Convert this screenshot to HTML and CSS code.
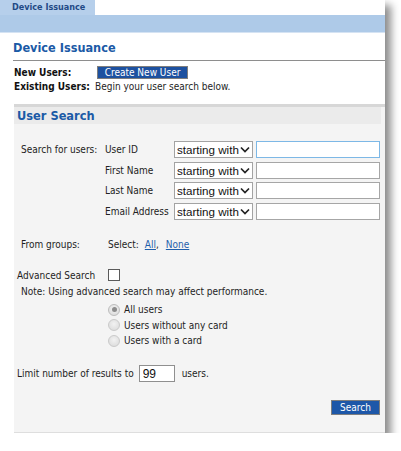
FILE: index.html
```html
<!DOCTYPE html>
<html>
<head>
<meta charset="utf-8">
<link rel="stylesheet" href="styles.css">
</head>
<body>
<div class="window">
  <div class="tabbar"><div class="tab">Device Issuance</div></div>
  <div class="band"></div>
  <div class="top">
    <h1 class="title">Device Issuance</h1>
    <div class="rule"></div>
    <div class="info-row first">
      <span class="info-label">New Users:</span>
      <button class="btn btn-create">Create New User</button>
    </div>
    <div class="info-row">
      <span class="info-label">Existing Users:</span>
      <span class="info-text">Begin your user search below.</span>
    </div>
  </div>
  <div class="panel">
    <div class="panel-head">User Search</div>
    <div class="search-grid">
      <span class="lbl">Search for users:</span><span class="field">User ID</span>
      <select class="sel"><option>starting with</option></select><input class="txt focus" type="text">
      <span></span><span class="field">First Name</span>
      <select class="sel"><option>starting with</option></select><input class="txt" type="text">
      <span></span><span class="field">Last Name</span>
      <select class="sel"><option>starting with</option></select><input class="txt" type="text">
      <span></span><span class="field">Email Address</span>
      <select class="sel"><option>starting with</option></select><input class="txt" type="text">
    </div>
    <div class="groups-row">
      <span class="groups-label">From groups:</span>
      <span>Select:</span>
      <a class="link link-all" href="#">All</a><span>,</span>
      <a class="link link-none" href="#">None</a>
    </div>
    <div class="adv-row">
      <span class="adv-label">Advanced Search</span>
      <span class="checkbox"></span>
    </div>
    <div class="note">Note: Using advanced search may affect performance.</div>
    <div class="radios">
      <div class="radio-row"><span class="radio checked"></span><span>All users</span></div>
      <div class="radio-row"><span class="radio"></span><span>Users without any card</span></div>
      <div class="radio-row"><span class="radio"></span><span>Users with a card</span></div>
    </div>
    <div class="limit-row">
      <span>Limit number of results to</span>
      <input class="txt limit" type="text" value="99">
      <span>users.</span>
    </div>
    <div class="actions">
      <button class="btn btn-search">Search</button>
    </div>
  </div>
</div>
</body>
</html>
```

FILE: styles.css
```css
* { box-sizing: border-box; }
html, body { margin: 0; padding: 0; background: #fff; }
body {
  font-family: "DejaVu Sans Condensed", "DejaVu Sans", sans-serif;
  font-size: 10px;
  color: #1e1e1e;
}
.window {
  width: 385px;
  height: 433px;
  background: #fff;
  box-shadow: 5px 6px 8px 1px rgba(0, 0, 0, 0.45);
}
.tabbar { height: 15px; display: flex; }
.tab {
  width: 95px;
  height: 15px;
  background: #b6cfeb;
  padding-left: 12px;
  font-weight: bold;
  font-size: 9px;
  line-height: 15px;
  color: #1f4a86;
}
.band {
  height: 18px;
  background: #aecae8;
  border-bottom: 1px solid #d5e3f3;
}
.title {
  margin: 7px 0 0 13px;
  font-size: 12.6px;
  line-height: 16px;
  font-weight: bold;
  color: #1b5aa6;
}
.rule {
  margin: 4px 0 0 13px;
  height: 1px;
  background: #8e8e8e;
}
.info-row {
  display: flex;
  align-items: center;
  height: 13px;
  margin: 1px 0 0 14px;
}
.info-row.first { margin-top: 5px; }
.info-label { width: 81px; font-weight: bold; color: #111; }
.btn {
  font-family: "DejaVu Sans Condensed", "DejaVu Sans", sans-serif;
  font-size: 10px;
  color: #fff;
  background: #1d51a0;
  border: 1px solid #7e7e7e;
  padding: 0;
  margin: 0;
  cursor: pointer;
}
.btn-create { width: 91px; height: 13px; line-height: 11px; margin-left: 2px; }
.panel {
  margin: 11px 0 0 14px;
  background: #f4f4f4;
  border-top: 3px solid #d7d7d7;
  border-bottom: 1px solid #dedede;
  padding-bottom: 17px;
}
.panel-head {
  height: 17px;
  margin-right: 4px;
  background: #ebebeb;
  padding-left: 3px;
  font-size: 12.7px;
  line-height: 17px;
  font-weight: bold;
  color: #1b5aa6;
}
.search-grid {
  display: grid;
  grid-template-columns: 84px 69px 79px 127px;
  grid-auto-rows: 17px;
  row-gap: 3.7px;
  margin-top: 17px;
  padding-left: 7px;
  align-items: center;
}
.lbl, .field { color: #222; }
.sel {
  -webkit-appearance: none;
  appearance: none;
  width: 79px;
  height: 17px;
  margin: 0;
  padding: 0 0 0 2px;
  border: 1px solid #a3a3a3;
  border-radius: 0;
  background: #fff url("data:image/svg+xml,%3Csvg xmlns='http://www.w3.org/2000/svg' width='10' height='7'%3E%3Cpath d='M1 1.5l4 4 4-4' fill='none' stroke='%23222' stroke-width='1.7'/%3E%3C/svg%3E") no-repeat right 2px center;
  font-family: "Liberation Sans", Arial, sans-serif;
  font-size: 11.6px;
  color: #111;
  line-height: 15px;
}
.txt {
  height: 17px;
  margin: 0;
  padding: 0 3px;
  border: 1px solid #a6a6a6;
  border-radius: 0;
  background: #fff;
  font-family: "Liberation Sans", Arial, sans-serif;
  font-size: 12px;
  color: #111;
  outline: none;
}
.search-grid .txt { width: 124px; margin-left: 3px; }
.txt.focus { border-color: #7db8e6; }
.groups-row {
  display: flex;
  align-items: center;
  height: 14px;
  margin-top: 17px;
  padding-left: 7px;
}
.groups-label { width: 87px; }
.link { color: #1f5fab; text-decoration: underline; }
.link-all { margin-left: 6px; }
.link-none { margin-left: 7px; }
.adv-row {
  display: flex;
  align-items: center;
  height: 14px;
  margin-top: 17px;
  padding-left: 3px;
}
.adv-label { width: 91px; }
.checkbox {
  width: 12px;
  height: 12px;
  background: #fff;
  border: 1px solid #5a5a5a;
}
.note {
  height: 14px;
  line-height: 14px;
  margin-top: 3px;
  padding-left: 7px;
}
.radios { margin-top: 3px; padding-left: 94px; }
.radio-row {
  display: flex;
  align-items: center;
  gap: 4px;
  height: 15.5px;
}
.radio {
  width: 12px;
  height: 12px;
  border-radius: 50%;
  border: 1px solid #cacaca;
  background: radial-gradient(circle at 50% 40%, #f2f2f2 0%, #e0e0e0 70%, #d4d4d4 100%);
  display: flex;
  align-items: center;
  justify-content: center;
}
.radio.checked { border-color: #bdbdbd; }
.radio.checked::after {
  content: "";
  width: 5px;
  height: 5px;
  border-radius: 50%;
  background: #8c8c8c;
}
.limit-row {
  display: flex;
  align-items: center;
  height: 17px;
  margin-top: 16.5px;
  padding-left: 3px;
}
.limit { width: 36px; margin: 0 7px 0 5px; border-color: #8f8f8f; }
.actions {
  display: flex;
  justify-content: flex-end;
  margin-top: 18px;
  padding-right: 5px;
}
.btn-search { width: 49px; height: 15px; line-height: 13px; background: #1d57a8; }
```
